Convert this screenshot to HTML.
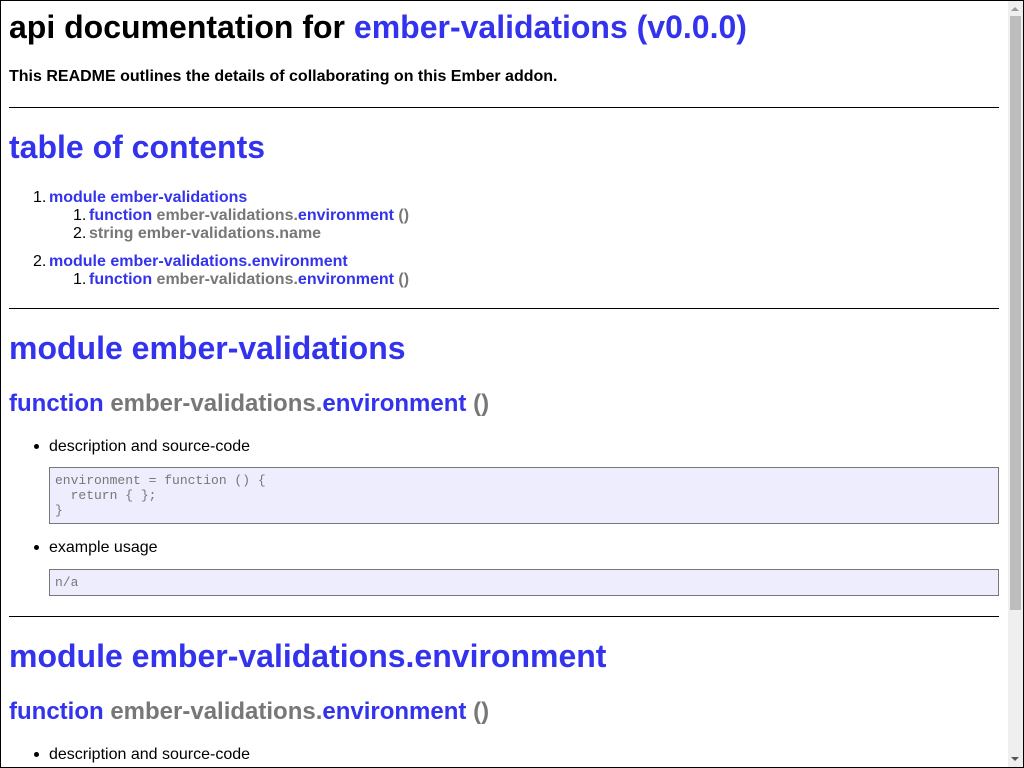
<!DOCTYPE html>
<html><head><meta charset="utf-8"><style>
html,body{margin:0;padding:0;width:1024px;height:768px;overflow:hidden;background:#fff;font-family:"Liberation Sans",Arial,sans-serif;color:#000}
.a{position:absolute;white-space:nowrap;margin:0}
.b{color:#3333ee}.g{color:#777}
.h1{font-size:32px;font-weight:bold;line-height:37px}
.h3{font-size:24px;font-weight:bold;line-height:28px}
.li{font-size:16px;line-height:18px;font-weight:bold}
.t{font-size:16px;line-height:18px}
hr{position:absolute;left:9px;width:990px;height:0;border:0;border-top:1px solid #000;margin:0}
.pre{position:absolute;left:49px;width:950px;border:1px solid #777;background:#ededfd;font-family:"Liberation Mono",monospace;font-size:13px;line-height:15px;color:#777;padding:5px;box-sizing:border-box;white-space:pre;margin:0}
.dot{position:absolute;width:5px;height:5px;border-radius:3px;background:#000}
.n{position:absolute;font-weight:normal;font-size:16px;line-height:18px}
</style></head><body>
<div style="position:absolute;left:0;top:0;width:1022px;height:766px;border:1px solid #000"></div>
<div style="position:absolute;left:1008px;top:1px;width:15px;height:766px;background:#efefef"></div>
<div style="position:absolute;left:1010px;top:16px;width:11px;height:594px;background:#bdbdbd"></div>
<div style="position:absolute;left:1011px;top:7px;width:0;height:0;border-left:4px solid transparent;border-right:4px solid transparent;border-bottom:4px solid #999"></div>
<div style="position:absolute;left:1011px;top:757px;width:0;height:0;border-left:4px solid transparent;border-right:4px solid transparent;border-top:4px solid #555"></div>

<div class="a h1" style="left:9px;top:9px">api documentation for <span class="b">ember-validations (v0.0.0)</span></div>
<div class="a li" style="left:9px;top:68px">This README outlines the details of collaborating on this Ember addon.</div>
<hr style="top:107px">
<div class="a h1 b" style="left:9px;top:129px">table of contents</div>
<div class="n" style="left:33px;top:189px">1.</div>
<div class="a li b" style="left:49px;top:189px">module ember-validations</div>
<div class="n" style="left:73px;top:207px">1.</div>
<div class="a li" style="left:89px;top:207px"><span class="b">function</span> <span class="g">ember-validations.</span><span class="b">environment</span> <span class="g">()</span></div>
<div class="n" style="left:73px;top:225px">2.</div>
<div class="a li g" style="left:89px;top:225px">string ember-validations.name</div>
<div class="n" style="left:33px;top:253px">2.</div>
<div class="a li b" style="left:49px;top:253px">module ember-validations.environment</div>
<div class="n" style="left:73px;top:271px">1.</div>
<div class="a li" style="left:89px;top:271px"><span class="b">function</span> <span class="g">ember-validations.</span><span class="b">environment</span> <span class="g">()</span></div>
<hr style="top:308px">
<div class="a h1 b" style="left:9px;top:330px">module ember-validations</div>
<div class="a h3" style="left:9px;top:390px"><span class="b">function</span> <span class="g">ember-validations.</span><span class="b">environment</span> <span class="g">()</span></div>
<div class="dot" style="left:34px;top:444px"></div>
<div class="a t" style="left:49px;top:438px">description and source-code</div>
<div class="pre" style="top:467px;height:57px">environment = function () {
  return { };
}</div>
<div class="dot" style="left:34px;top:545px"></div>
<div class="a t" style="left:49px;top:539px">example usage</div>
<div class="pre" style="top:569px;height:27px">n/a</div>
<hr style="top:616px">
<div class="a h1 b" style="left:9px;top:638px">module ember-validations.environment</div>
<div class="a h3" style="left:9px;top:698px"><span class="b">function</span> <span class="g">ember-validations.</span><span class="b">environment</span> <span class="g">()</span></div>
<div class="dot" style="left:34px;top:752px"></div>
<div class="a t" style="left:49px;top:746px">description and source-code</div>
</body></html>
